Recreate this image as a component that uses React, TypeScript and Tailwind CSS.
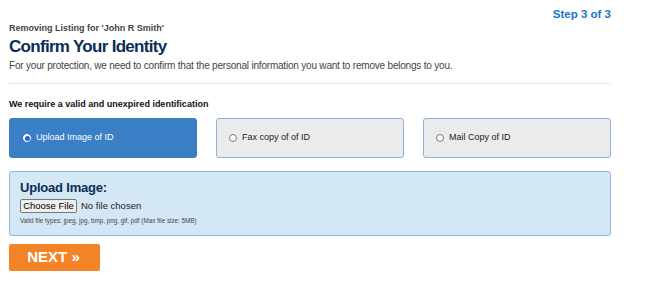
import React from "react";

function Radio({ checked }: { checked?: boolean }) {
  return (
    <span
      className={
        "inline-flex items-center justify-center w-[8px] h-[8px] rounded-full border shrink-0 " +
        (checked ? "border-white bg-white" : "border-[#777] bg-white")
      }
    >
      {checked ? <span className="w-[5px] h-[5px] rounded-full bg-[#1f5fe0] block" /> : null}
    </span>
  );
}

export default function App() {
  return (
    <div className="w-[650px] h-[282px] bg-white font-['Liberation_Sans',Arial,sans-serif]">
      <div className="w-[602px] ml-[9px] pt-[6px]">
        <div className="flex justify-end text-[11.5px] font-bold text-[#1b73c9] leading-[16px]">Step 3 of 3</div>
        <div className="text-[9px] font-bold text-[#444] leading-[13px]">Removing Listing for 'John R Smith'</div>
        <h1 className="text-[17px] tracking-[-0.7px] font-bold text-[#0b2d57] leading-[22px] mt-[1px]">Confirm Your Identity</h1>
        <p className="text-[10px] tracking-[-0.2px] text-[#444] leading-[13px] mt-[1px]">
          For your protection, we need to confirm that the personal information you want to remove belongs to you.
        </p>
        <div className="h-px bg-[#e6e6e6] mt-[11px]" />
        <div className="text-[9px] font-bold text-[#111] mt-[14px] leading-[12px]">We require a valid and unexpired identification</div>
        <div className="grid grid-cols-3 gap-[19px] mt-[8px]">
          <div className="h-[40px] rounded-[3px] bg-[#3a7ec5] border border-[#3a7ec5] flex items-center pl-[13px] gap-[5px] text-white text-[9px]">
            <Radio checked />
            <span>Upload Image of ID</span>
          </div>
          <div className="h-[40px] rounded-[3px] bg-[#ebebeb] border border-[#8fb0d9] flex items-center pl-[12px] gap-[5px] text-[#222] text-[9px]">
            <Radio />
            <span>Fax copy of of ID</span>
          </div>
          <div className="h-[40px] rounded-[3px] bg-[#ebebeb] border border-[#8fb0d9] flex items-center pl-[12px] gap-[5px] text-[#222] text-[9px]">
            <Radio />
            <span>Mail Copy of ID</span>
          </div>
        </div>
        <div className="mt-[13px] h-[65px] rounded-[3px] bg-[#d3e8f4] border border-[#8cb4e6] pl-[10px] pt-[7px]">
          <div className="text-[13px] tracking-[-0.2px] font-bold text-[#0b2d57] leading-[17px]">Upload Image:</div>
          <div className="flex items-center mt-[3px]">
            <button className="h-[14px] w-[57px] text-[9.5px] leading-[12px] bg-[#efefef] border border-[#767676] rounded-[2px] text-black">Choose File</button>
            <span className="ml-[4px] text-[9.5px] text-[#222]">No file chosen</span>
          </div>
          <div className="text-[6.3px] text-[#444] mt-[4px] leading-[8px]">Valid file types: jpeg, jpg, bmp, png, gif, pdf (Max file size: 5MB)</div>
        </div>
        <button className="mt-[8px] w-[91px] h-[27px] rounded-[2px] bg-[#f28427] text-white font-bold text-[15px] flex items-center justify-center pr-[2px]">
          NEXT »
        </button>
      </div>
    </div>
  );
}
